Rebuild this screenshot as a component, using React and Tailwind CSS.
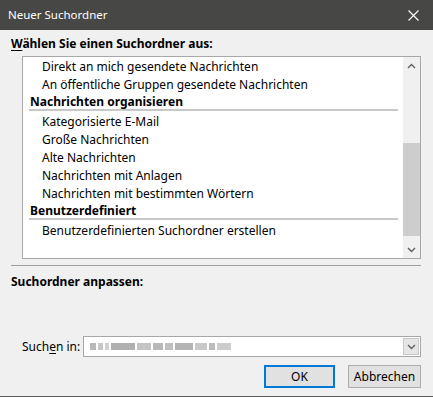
import React from 'react';

const font = { fontFamily: '"Segoe UI", "Noto Sans", "Liberation Sans", sans-serif' };

const Item = ({ children }) => (
  <div className="h-[18px] leading-[18px] pl-[19px] whitespace-nowrap text-[12px] text-black">{children}</div>
);

const Group = ({ children }) => (
  <div className="mr-[5px] mb-[2px] ml-[6px]">
    <div className="h-[15px] leading-[15px] pl-[1px] font-bold text-[12px] text-black whitespace-nowrap">{children}</div>
    <div className="h-[2px] bg-[#c8c8c8]" />
  </div>
);

const Chevron = ({ up }) => (
  <svg width="9" height="6" viewBox="0 0 9 6" className="text-[#606060]">
    <path d={up ? 'M1 5 L4.5 1.5 L8 5' : 'M1 1 L4.5 4.5 L8 1'} fill="none" stroke="currentColor" strokeWidth="1.4" />
  </svg>
);

export default function App() {
  return (
    <div className="w-[433px] h-[397px] bg-[#f0f0f0] flex flex-col overflow-hidden border-b border-[#5a5a5a]" style={font}>
      {/* Title bar */}
      <div className="h-[30px] bg-[#474745] flex items-center justify-between pl-[8px] pr-[14px] shrink-0">
        <span className="text-white text-[11.5px]">Neuer Suchordner</span>
        <svg width="11" height="11" viewBox="0 0 11 11">
          <path d="M0.5 0.5 L10.5 10.5 M10.5 0.5 L0.5 10.5" stroke="#ffffff" strokeWidth="1.1" />
        </svg>
      </div>

      <div className="flex flex-col flex-1 pl-[11px] pr-[12px]">
        <div className="mt-[6px] h-[16px] leading-[16px] text-[12px] font-bold text-black whitespace-nowrap">
          <span className="underline underline-offset-2">W</span>ählen Sie einen Suchordner aus:
        </div>

        {/* Listbox */}
        <div className="ml-[11px] mt-[4px] h-[203px] border border-[#a8a8a8] bg-white flex">
          <div className="flex-1 flex flex-col pt-[1px] overflow-hidden">
            <Item>Direkt an mich gesendete Nachrichten</Item>
            <Item>An öffentliche Gruppen gesendete Nachrichten</Item>
            <Group>Nachrichten organisieren</Group>
            <Item>Kategorisierte E-Mail</Item>
            <Item>Große Nachrichten</Item>
            <Item>Alte Nachrichten</Item>
            <Item>Nachrichten mit Anlagen</Item>
            <Item>Nachrichten mit bestimmten Wörtern</Item>
            <Group>Benutzerdefiniert</Group>
            <Item>Benutzerdefinierten Suchordner erstellen</Item>
          </div>
          <div className="w-[17px] bg-[#f0f0f0] flex flex-col">
            <div className="h-[17px] flex items-center justify-center"><Chevron up /></div>
            <div className="h-[69px]" />
            <div className="h-[93px] bg-[#cdcdcd]" />
            <div className="flex-1" />
            <div className="h-[17px] flex items-center justify-center"><Chevron /></div>
          </div>
        </div>

        <div className="mt-[6px] h-[1px] bg-[#a0a0a0]" />

        <div className="mt-[8px] h-[16px] leading-[16px] text-[12px] font-bold text-black whitespace-nowrap">Suchordner anpassen:</div>

        <div className="mt-[46px] flex items-center ml-[11px]">
          <span className="text-[12px] text-black shrink-0 whitespace-nowrap pr-[3px]">
            Such<span className="underline underline-offset-2">e</span>n in:
          </span>
          <div className="flex-1 h-[21px] border border-[#a8a8a8] bg-white flex items-center">
            <div className="flex-1 flex items-center gap-[2px] pl-[6px]">
              <span className="w-[6px] h-[7px] bg-[#b8b8b8]" />
              <span className="w-[5px] h-[7px] bg-[#c8c8c8]" />
              <span className="w-[4px] h-[7px] bg-[#d0d0d0]" />
              <span className="w-[24px] h-[7px] bg-[#b0b0b0]" />
              <span className="w-[14px] h-[7px] bg-[#c4c4c4]" />
              <span className="w-[10px] h-[7px] bg-[#b8b8b8]" />
              <span className="w-[8px] h-[7px] bg-[#c0c0c0]" />
              <span className="w-[18px] h-[7px] bg-[#b4b4b4]" />
              <span className="w-[12px] h-[7px] bg-[#c8c8c8]" />
              <span className="w-[6px] h-[7px] bg-[#bcbcbc]" />
              <span className="w-[14px] h-[7px] bg-[#cccccc]" />
            </div>
            <div className="w-[16px] h-[17px] mr-[1px] bg-[#e5e5e5] border border-[#c8c8c8] flex items-center justify-center">
              <Chevron />
            </div>
          </div>
        </div>

        <div className="mt-[8px] flex justify-end gap-[13px]">
          <button className="w-[71px] h-[23px] bg-[#e1e1e1] border-2 border-[#0078d7] text-[12px] text-black">OK</button>
          <button className="w-[73px] h-[23px] bg-[#e1e1e1] border border-[#adadad] text-[12px] text-black">Abbrechen</button>
        </div>
      </div>
    </div>
  );
}
